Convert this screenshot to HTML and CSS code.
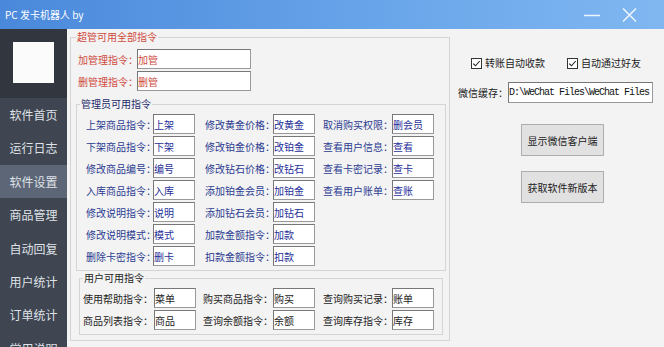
FILE: index.html
```html
<!DOCTYPE html>
<html lang="zh-CN">
<head>
    <meta charset="UTF-8">
    <meta name="viewport" content="width=device-width, initial-scale=1.0">
    <title>PC 发卡机器人</title>
    <link rel="stylesheet" href="styles.css">
</head>
<body>
    <header class="titlebar">
        <span class="title">PC 发卡机器人 by</span>
        <div class="win-btns">
            <svg width="16" height="14" viewBox="0 0 16 14"><line x1="0" y1="7.5" x2="16" y2="7.5" stroke="#eef4fc" stroke-width="1.5"/></svg>
            <svg width="15" height="14" viewBox="0 0 15 14"><path d="M1 0.5 L14 13.5 M14 0.5 L1 13.5" stroke="#eef4fc" stroke-width="1.5" fill="none"/></svg>
        </div>
    </header>
    <div class="layout">
        <aside class="side">
            <div class="side-top"><div class="avatar"></div></div>
            <nav class="nav">
                <p>软件首页</p>
                <p>运行日志</p>
                <p class="active">软件设置</p>
                <p>商品管理</p>
                <p>自动回复</p>
                <p>用户统计</p>
                <p>订单统计</p>
                <p>常用说明</p>
            </nav>
        </aside>
        <main class="main">
            <fieldset class="grp grp-super">
                <legend>超管可用全部指令</legend>
                <div class="sup-rows">
                    <div class="sup-row"><label>加管理指令：</label><input type="text" value="加管" readonly></div>
                    <div class="sup-row"><label>删管理指令：</label><input type="text" value="删管" readonly></div>
                </div>
                <fieldset class="grp grp-admin">
                    <legend>管理员可用指令</legend>
                    <div class="cmds cmds-admin">
                        <label>上架商品指令：</label><input type="text" value="上架" readonly>
                        <label>修改黄金价格：</label><input type="text" value="改黄金" readonly>
                        <label>取消购买权限：</label><input type="text" value="删会员" readonly>

                        <label>下架商品指令：</label><input type="text" value="下架" readonly>
                        <label>修改铂金价格：</label><input type="text" value="改铂金" readonly>
                        <label>查看用户信息：</label><input type="text" value="查看" readonly>

                        <label>修改商品编号：</label><input type="text" value="编号" readonly>
                        <label>修改钻石价格：</label><input type="text" value="改钻石" readonly>
                        <label>查看卡密记录：</label><input type="text" value="查卡" readonly>

                        <label>入库商品指令：</label><input type="text" value="入库" readonly>
                        <label>添加铂金会员：</label><input type="text" value="加铂金" readonly>
                        <label>查看用户账单：</label><input type="text" value="查账" readonly>

                        <label>修改说明指令：</label><input type="text" value="说明" readonly>
                        <label>添加钻石会员：</label><input type="text" value="加钻石" readonly>
                        <span></span><span></span>

                        <label>修改说明模式：</label><input type="text" value="模式" readonly>
                        <label>加款金额指令：</label><input type="text" value="加款" readonly>
                        <span></span><span></span>

                        <label>删除卡密指令：</label><input type="text" value="删卡" readonly>
                        <label>扣款金额指令：</label><input type="text" value="扣款" readonly>
                        <span></span><span></span>
                    </div>
                </fieldset>
                <fieldset class="grp grp-user">
                    <legend>用户可用指令</legend>
                    <div class="cmds cmds-user">
                        <label>使用帮助指令：</label><input type="text" value="菜单" readonly>
                        <label>购买商品指令：</label><input type="text" value="购买" readonly>
                        <label>查询购买记录：</label><input type="text" value="账单" readonly>

                        <label>商品列表指令：</label><input type="text" value="商品" readonly>
                        <label>查询余额指令：</label><input type="text" value="余额" readonly>
                        <label>查询库存指令：</label><input type="text" value="库存" readonly>
                    </div>
                </fieldset>
            </fieldset>
            <section class="right">
                <div class="checks">
                    <span class="chk">
                        <svg width="11" height="11" viewBox="0 0 11 11"><rect x="0.5" y="0.5" width="10" height="10" fill="#fff" stroke="#333"/><path d="M2.3 5.6 L4.5 7.8 L8.7 3" stroke="#222" stroke-width="1.1" fill="none"/></svg>
                        转账自动收款
                    </span>
                    <span class="chk">
                        <svg width="11" height="11" viewBox="0 0 11 11"><rect x="0.5" y="0.5" width="10" height="10" fill="#fff" stroke="#333"/><path d="M2.3 5.6 L4.5 7.8 L8.7 3" stroke="#222" stroke-width="1.1" fill="none"/></svg>
                        自动通过好友
                    </span>
                </div>
                <div class="cache">
                    <label>微信缓存：</label>
                    <input type="text" class="path" value="D:\WeChat Files\WeChat Files" readonly>
                </div>
                <div class="btns">
                    <button>显示微信客户端</button>
                    <button>获取软件新版本</button>
                </div>
            </section>
        </main>
    </div>
</body>
</html>
```

FILE: styles.css
```css
body {
    margin: 0;
    width: 664px;
    height: 347px;
    overflow: hidden;
    background: #f3f3f3;
    font-family: "Noto Sans CJK SC", "Noto Sans", sans-serif;
    font-size: 10px;
    color: #222;
}
.titlebar {
    height: 29px;
    display: flex;
    align-items: center;
    padding-left: 5px;
    background: linear-gradient(90deg, #4a88db, #6aa6ea 60%, #80b7f1);
    color: #fff;
}
.title {
    flex: 1;
    line-height: 12px;
}
.win-btns {
    display: flex;
    align-items: center;
    gap: 22px;
    margin-right: 27px;
}
.win-btns svg {
    display: block;
}
.layout {
    display: flex;
    height: 318px;
}
.side {
    width: 67px;
    flex: none;
    background: #3f4551;
}
.side-top {
    height: 69px;
    box-sizing: border-box;
    padding-top: 13px;
    background: #31363f;
    display: flex;
    justify-content: center;
}
.avatar {
    width: 41px;
    height: 41px;
    background: #fbfbfb;
}
.nav p {
    margin: 0;
    height: 33.4px;
    line-height: 33.4px;
    text-align: center;
    font-size: 12px;
    color: #dfe2e7;
}
.nav p.active {
    background: #5d6677;
}
.main {
    flex: 1;
    display: flex;
    align-items: flex-start;
}
.grp {
    margin: 0;
    border: 1px solid #d4d4d4;
    box-sizing: border-box;
    min-width: 0;
}
.grp legend {
    padding: 0;
    line-height: 12px;
}
.grp-super {
    margin: 2px 0 0 3px;
    width: 380px;
    padding: 6px 3px 5px 5px;
}
.grp-super legend {
    padding: 0 1px;
    color: #cf4a3c;
}
.sup-rows {
    display: flex;
    flex-direction: column;
    gap: 2px;
    padding-left: 2px;
}
.sup-row {
    display: flex;
    align-items: center;
    height: 20px;
}
.sup-row label {
    width: 59px;
    color: #cf4a3c;
    white-space: nowrap;
}
.sup-row input {
    width: 114px;
    color: #cf4a3c;
}
input {
    height: 20px;
    box-sizing: border-box;
    margin: 0;
    padding: 0 1px 0 0;
    border: 1px solid #777;
    border-right-color: #999;
    border-bottom-color: #999;
    background: #fff;
    font-family: inherit;
    font-size: 10px;
    outline: none;
}
.grp-admin {
    margin-top: 7px;
    width: 370px;
    padding: 4px 3px 4px 3px;
}
.grp-admin legend {
    color: #1c2a6b;
}
.cmds {
    display: grid;
    grid-auto-rows: 20px;
    row-gap: 2px;
    align-items: center;
    white-space: nowrap;
}
.cmds input {
    width: 42px;
}
.cmds-admin {
    padding-left: 6px;
    grid-template-columns: 67px 52px 68px 50px 69px 42px;
    color: #2b3b91;
}
.cmds-admin input {
    color: #1f2f99;
}
.grp-user {
    margin: 1px 0 0 3px;
    width: 364px;
    padding: 4px 3px 4px 3px;
}
.grp-user legend {
    color: #222;
}
.cmds-user {
    grid-template-columns: 71px 49px 70px 50px 69px 42px;
}
.cmds-user input {
    color: #222;
}
.right {
    flex: 1;
    padding-left: 8px;
}
.checks {
    margin: 28px 0 0 13px;
    display: flex;
    gap: 22px;
    line-height: 12px;
}
.chk {
    display: flex;
    align-items: center;
    gap: 3px;
}
.chk svg {
    display: block;
}
.cache {
    margin-top: 13px;
    display: flex;
    align-items: center;
}
.cache label {
    width: 50px;
    white-space: nowrap;
}
.cache .path {
    width: 145px;
    height: 21px;
    padding: 0;
    font-family: "Liberation Mono", monospace;
    font-size: 10px;
    letter-spacing: -1px;
    color: #111;
}
.btns {
    margin: 21px 0 0 63px;
    display: flex;
    flex-direction: column;
    gap: 15px;
}
button {
    width: 83px;
    height: 32px;
    padding: 0;
    background: #e1e1e1;
    border: 1px solid #adadad;
    font-family: inherit;
    font-size: 10px;
    color: #222;
}
```
